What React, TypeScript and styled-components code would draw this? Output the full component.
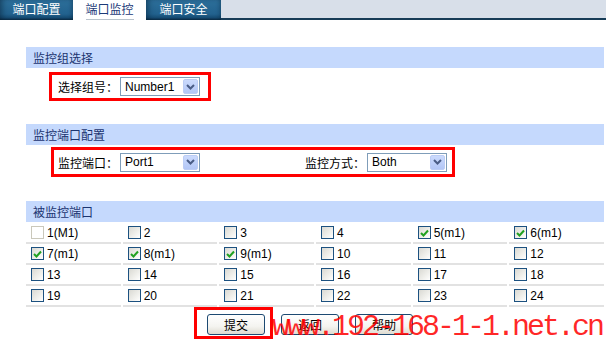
import React from "react";
import styled, { createGlobalStyle } from "styled-components";

const Global = createGlobalStyle`
  html, body { margin: 0; padding: 0; background: #fff; }
  body {
    font-family: "Liberation Sans", "Noto Sans CJK SC", sans-serif;
    font-size: 12px;
    color: #000;
  }
`;

const Page = styled.div`
  position: relative;
  width: 606px;
  height: 347px;
  overflow: hidden;
`;

const TabBar = styled.div`
  display: flex;
  height: 20px;
`;

const Tab = styled.div<{ $active?: boolean }>`
  position: relative;
  width: ${(p) => (p.$active ? 73 : 73)}px;
  height: 20px;
  display: flex;
  align-items: center;
  justify-content: center;
  font-family: "Noto Sans CJK SC", sans-serif;
  font-size: 12px;
  line-height: 1;
  padding-bottom: 2px;
  box-sizing: border-box;
  color: ${(p) => (p.$active ? "#1c3a78" : "#fff")};
  background: ${(p) =>
    p.$active
      ? "#fff"
      : "linear-gradient(to bottom, #2d6f9a 0%, #22628e 70%, #174d74 88%, #0b2c44 100%)"};
  box-shadow: ${(p) =>
    p.$active ? "none" : "inset 6px 0 6px -4px rgba(5,30,50,0.55), inset -3px 0 4px -2px rgba(5,30,50,0.4)"};
  ${(p) =>
    p.$active &&
    `
    &::after {
      content: "";
      position: absolute;
      left: 13px;
      right: 12px;
      bottom: 0;
      height: 1px;
      background: #b9c3cc;
    }
  `}
`;

const TabFill = styled.div`
  flex: 1;
  height: 20px;
  box-sizing: border-box;
  background: #d8dfe9;
  border-bottom: 2px solid #173c57;
`;

const Content = styled.div`
  padding: 0 2px 0 26px;
`;

const SectionHeader = styled.div<{ $top: number }>`
  margin-top: ${(p) => p.$top}px;
  height: 21px;
  background: #c5d9fd;
  color: #1b3470;
  font-family: "Noto Sans CJK SC", sans-serif;
  font-size: 12px;
  display: flex;
  align-items: center;
  padding-left: 7px;
`;

const FormRow = styled.div<{ $indent: number; $top: number }>`
  display: flex;
  padding-left: ${(p) => p.$indent}px;
  margin-top: ${(p) => p.$top}px;
`;

const RedBox = styled.div<{ $pl: number; $pr: number; $h: number }>`
  display: flex;
  align-items: center;
  box-sizing: border-box;
  height: ${(p) => p.$h}px;
  border: 3px solid #f00;
  padding-left: ${(p) => p.$pl}px;
  padding-right: ${(p) => p.$pr}px;
`;

const Label = styled.span<{ $ml?: number }>`
  font-family: "Noto Sans CJK SC", sans-serif;
  font-size: 12px;
  width: 62px;
  margin-left: ${(p) => p.$ml || 0}px;
  white-space: nowrap;
`;

const SelectBox = styled.div`
  width: 80px;
  height: 19px;
  box-sizing: border-box;
  border: 1px solid #7f9db9;
  background: #fff;
  display: flex;
  align-items: center;
  justify-content: space-between;
  padding-left: 4px;
  padding-right: 1px;
  font-size: 12px;
`;

const ArrowBtn = styled.div`
  width: 15px;
  height: 15px;
  box-sizing: border-box;
  border: 1px solid #bccdf5;
  border-radius: 2px;
  background: linear-gradient(to bottom, #cbdafd, #b3c7f6);
  display: flex;
  align-items: center;
  justify-content: center;
`;

const Grid = styled.div`
  display: grid;
  grid-template-columns: repeat(6, 1fr);
  column-gap: 2px;
  margin-top: 1px;
`;

const Cell = styled.div`
  height: 21px;
  box-sizing: border-box;
  border-bottom: 2px solid #e2e2e2;
  display: flex;
  align-items: center;
  padding-left: 5px;
  gap: 3px;
  font-size: 12px;
`;

const Box = styled.span<{ $disabled?: boolean }>`
  width: 13px;
  height: 13px;
  box-sizing: border-box;
  border: 1px solid ${(p) => (p.$disabled ? "#cac8bb" : "#1c5180")};
  background: ${(p) =>
    p.$disabled ? "#fff" : "linear-gradient(135deg, #d9d9d3 0%, #f0f0ec 60%, #ffffff 100%)"};
  display: flex;
  align-items: center;
  justify-content: center;
`;

const ButtonRow = styled.div`
  display: flex;
  align-items: flex-start;
  padding-left: 194px;
  margin-top: 0px;
`;

const SubmitBox = styled.div`
  box-sizing: border-box;
  width: 79px;
  height: 32px;
  border: 3px solid #f00;
  padding: 4px 0 0 10px;
  margin-right: 8px;
`;

const Button = styled.div<{ $ml?: number }>`
  width: 58px;
  height: 21px;
  box-sizing: border-box;
  border: 1px solid #1d4a72;
  border-radius: 3px;
  background: linear-gradient(to bottom, #ffffff 0%, #f4f4f0 60%, #dedbd0 100%);
  font-family: "Noto Sans CJK SC", sans-serif;
  font-size: 12px;
  display: flex;
  align-items: center;
  justify-content: center;
  margin-left: ${(p) => p.$ml || 0}px;
  margin-top: ${(p) => (p.$ml !== undefined ? 7 : 0)}px;
`;

const Watermark = styled.div`
  position: absolute;
  left: 272px;
  top: 312px;
  font-family: "Liberation Mono", monospace;
  font-size: 30px;
  letter-spacing: -3px;
  color: rgba(255, 0, 0, 0.85);
  white-space: nowrap;
  line-height: 1;
`;

const Chevron = () => (
  <svg width="9" height="6" viewBox="0 0 9 6">
    <polyline points="1,1 4.5,4.5 8,1" fill="none" stroke="#4a5d86" strokeWidth="2" />
  </svg>
);

const Check = () => (
  <svg width="9" height="8" viewBox="0 0 9 8">
    <polyline points="1,4 3.5,6.5 8,1.5" fill="none" stroke="#21a121" strokeWidth="2" />
  </svg>
);

const Select = ({ value }: { value: string }) => (
  <SelectBox>
    <span>{value}</span>
    <ArrowBtn>
      <Chevron />
    </ArrowBtn>
  </SelectBox>
);

type Port = { label: string; checked?: boolean; disabled?: boolean };

const ports: Port[] = [
  { label: "1(M1)", disabled: true },
  { label: "2" },
  { label: "3" },
  { label: "4" },
  { label: "5(m1)", checked: true },
  { label: "6(m1)", checked: true },
  { label: "7(m1)", checked: true },
  { label: "8(m1)", checked: true },
  { label: "9(m1)", checked: true },
  ...Array.from({ length: 15 }, (_, i) => ({ label: String(i + 10) })),
];

export default function App() {
  return (
    <Page>
      <Global />
      <TabBar>
        <Tab>端口配置</Tab>
        <Tab $active>端口监控</Tab>
        <Tab style={{ width: 75 }}>端口安全</Tab>
        <TabFill />
      </TabBar>
      <Content>
        <SectionHeader $top={27}>监控组选择</SectionHeader>
        <FormRow $indent={23} $top={4}>
          <RedBox $pl={6} $pr={8} $h={29}>
            <Label>选择组号：</Label>
            <Select value="Number1" />
          </RedBox>
        </FormRow>

        <SectionHeader $top={23}>监控端口配置</SectionHeader>
        <FormRow $indent={25} $top={2}>
          <RedBox $pl={4} $pr={5} $h={30}>
            <Label>监控端口：</Label>
            <Select value="Port1" />
            <Label $ml={105}>监控方式：</Label>
            <Select value="Both" />
          </RedBox>
        </FormRow>

        <SectionHeader $top={24}>被监控端口</SectionHeader>
        <Grid>
          {ports.map((p) => (
            <Cell key={p.label}>
              <Box $disabled={p.disabled}>{p.checked && <Check />}</Box>
              <span>{p.label}</span>
            </Cell>
          ))}
        </Grid>
      </Content>
      <ButtonRow>
        <SubmitBox>
          <Button>提交</Button>
        </SubmitBox>
        <Button $ml={0}>返回</Button>
        <Button $ml={16}>帮助</Button>
      </ButtonRow>
      <Watermark>www.192-168-1-1.net.cn</Watermark>
    </Page>
  );
}
